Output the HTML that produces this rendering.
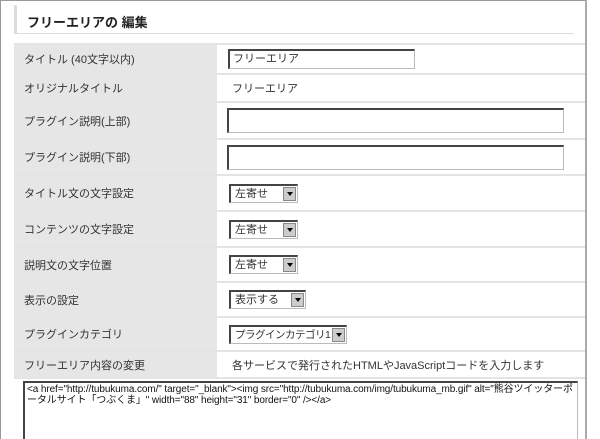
<!DOCTYPE html><html><head><meta charset="utf-8"><style>
*{box-sizing:border-box;margin:0;padding:0}
html,body{width:600px;height:439px;overflow:hidden}
body{background:#fff;font-family:"Liberation Sans","Noto Sans CJK JP",sans-serif;font-size:11px;color:#333;position:relative}
.lline{position:absolute;left:0;top:0;width:1px;height:439px;background:#999}
.tline{position:absolute;left:0;top:0;width:587px;height:1px;background:#999}
.rline{position:absolute;left:585px;top:0;width:2px;height:439px;background:#aaa}
.h{position:absolute;left:14px;top:5px;width:560px;height:29px;border-left:3px solid #ddd;border-bottom:1px solid #ddd;font-size:13px;font-weight:bold;padding:7px 0 0 10px;color:#222}
.row{position:absolute;left:14px;width:571px;border-top:2px solid #e4e4e4}
.lab{position:absolute;left:0;top:0;bottom:0;width:203px;background:#e6e6e6;padding-left:10px;display:flex;align-items:center;white-space:nowrap}
.val{position:absolute;left:205px;top:0;bottom:0;right:0;display:flex;align-items:center;padding-left:13px;white-space:nowrap}
.inp{border:1px solid #bbb;border-top:2px solid #444;border-left:2px solid #444;background:#fff;height:20px;padding:0 3px;font-size:11px;line-height:17px}
.sel{border:1px solid #bbb;border-top:2px solid #444;border-left:2px solid #444;background:#fff;height:19px;padding:0 4px;position:relative;font-size:11px;line-height:16px;white-space:nowrap;overflow:hidden}
.sel b{position:absolute;right:1px;top:1px;width:13px;height:14px;background:#ccc;border:1px solid #888}
.sel b:after{content:"";position:absolute;left:3px;top:4px;border:3px solid transparent;border-top:4px solid #000}
</style></head><body>
<div class="lline"></div><div class="tline"></div><div class="rline"></div>
<div class="h">フリーエリアの 編集</div>
<div class="row" style="top:43px;height:30px"><div class="lab">タイトル (40文字以内)</div><div class="val" style="padding-left:9px"><div class="inp" style="width:187px">フリーエリア</div></div></div>
<div class="row" style="top:73px;height:28px"><div class="lab">オリジナルタイトル</div><div class="val">フリーエリア</div></div>
<div class="row" style="top:101px;height:37px"><div class="lab">プラグイン説明(上部)</div><div class="val" style="padding-left:8px"><div class="inp" style="width:337px;height:25px"></div></div></div>
<div class="row" style="top:138px;height:36px"><div class="lab">プラグイン説明(下部)</div><div class="val" style="padding-left:8px"><div class="inp" style="width:337px;height:25px"></div></div></div>
<div class="row" style="top:174px;height:36px"><div class="lab">タイトル文の文字設定</div><div class="val" style="padding-left:10px"><div class="sel" style="width:69px">左寄せ<b></b></div></div></div>
<div class="row" style="top:210px;height:36px"><div class="lab">コンテンツの文字設定</div><div class="val" style="padding-left:10px"><div class="sel" style="width:69px">左寄せ<b></b></div></div></div>
<div class="row" style="top:246px;height:35px"><div class="lab">説明文の文字位置</div><div class="val" style="padding-left:10px"><div class="sel" style="width:69px">左寄せ<b></b></div></div></div>
<div class="row" style="top:281px;height:35px"><div class="lab">表示の設定</div><div class="val" style="padding-left:10px"><div class="sel" style="width:77px">表示する<b></b></div></div></div>
<div class="row" style="top:316px;height:34px"><div class="lab">プラグインカテゴリ</div><div class="val" style="padding-left:10px"><div class="sel" style="width:118px;font-size:10.5px;letter-spacing:-0.5px">プラグインカテゴリ1<b></b></div></div></div>
<div class="row" style="top:350px;height:27px"><div class="lab">フリーエリア内容の変更</div><div class="val">各サービスで発行されたHTMLやJavaScriptコードを入力します</div></div>
<div class="row" style="top:377px;height:62px"></div>
<div class="inp" style="position:absolute;left:23px;top:381px;width:555px;height:70px;font-size:10px;line-height:11px;padding:1px 2px;color:#111;letter-spacing:-0.1px">&lt;a href="http://tubukuma.com/" target="_blank"&gt;&lt;img src="http://tubukuma.com/img/tubukuma_mb.gif" alt="熊谷ツイッターポータルサイト「つぶくま」" width="88" height="31" border="0" /&gt;&lt;/a&gt;</div>
</body></html>
